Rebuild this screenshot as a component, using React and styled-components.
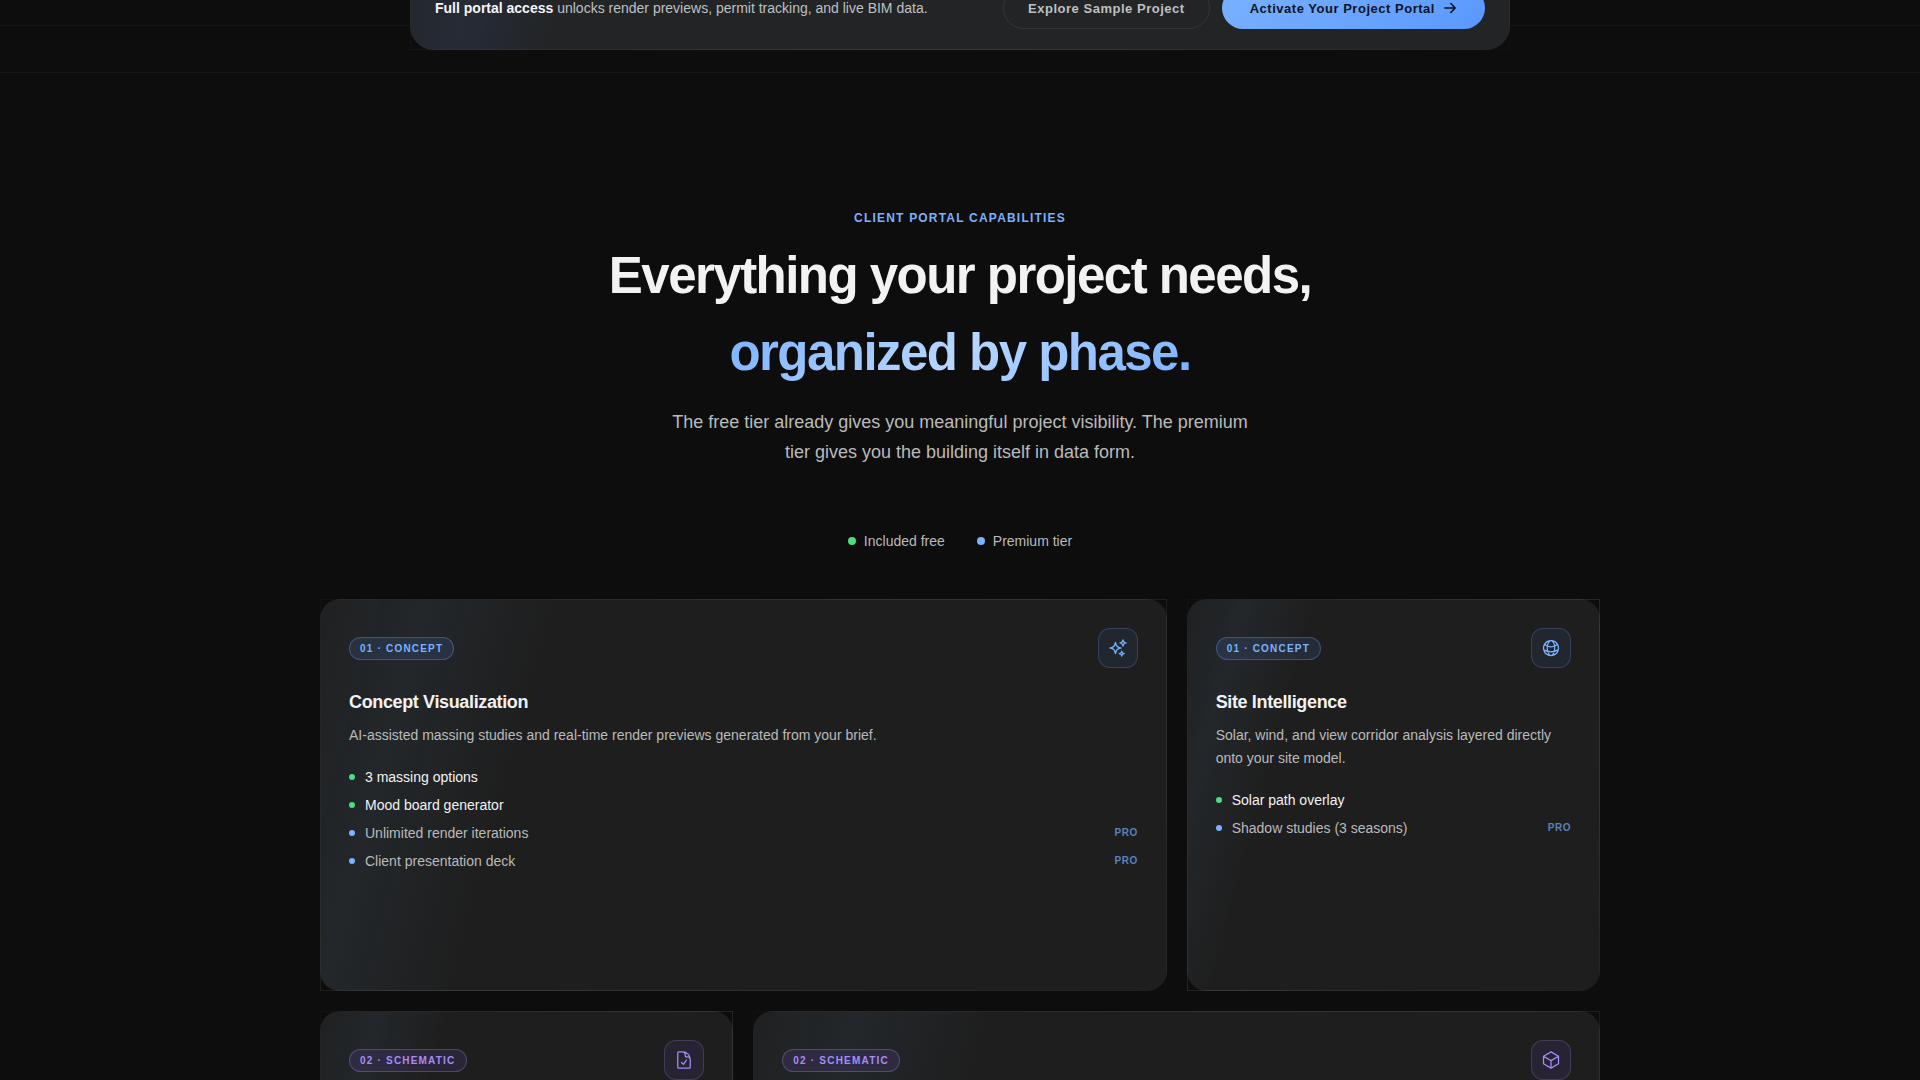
import React from 'react';
import styled, { createGlobalStyle } from 'styled-components';
import {
  HiOutlineArrowRight,
  HiOutlineCube,
  HiOutlineDocumentCheck,
  HiOutlineGlobeAlt,
  HiOutlineSparkles,
} from 'react-icons/hi2';

const GlobalStyle = createGlobalStyle`
  * {
    box-sizing: border-box;
  }

  body {
    margin: 0;
    background: #0d0d0d;
    color: #f2f2f3;
    font-family: "Liberation Sans", Arial, sans-serif;
    font-size: 14px;
    line-height: 22px;
  }
`;

const accents = {
  concept: {
    text: '#7ab2ff',
    fill: 'rgba(90, 152, 255, 0.12)',
    softFill: 'rgba(90, 152, 255, 0.08)',
    border: 'rgba(122, 178, 255, 0.28)',
    softBorder: 'rgba(122, 178, 255, 0.2)',
  },
  schematic: {
    text: '#a78bfa',
    fill: 'rgba(139, 92, 246, 0.12)',
    softFill: 'rgba(139, 92, 246, 0.1)',
    border: 'rgba(190, 175, 250, 0.24)',
    softBorder: 'rgba(190, 175, 250, 0.18)',
  },
};

// The banner sits on the bottom of this strip and runs off the top of it
const PromoSection = styled.section`
  position: relative;
  display: flex;
  align-items: flex-end;
  justify-content: center;
  height: 73px;
  padding: 0 24px 22px;
  border-bottom: 1px solid #151515;
  overflow: hidden;

  &::before {
    content: '';
    position: absolute;
    inset: 0 0 auto;
    height: 25px;
    border-bottom: 1px solid #151515;
  }
`;

const edgeGradient = 'linear-gradient(135deg, rgba(255, 255, 255, 0.02) 0%, rgba(255, 255, 255, 0.1) 50%, rgba(255, 255, 255, 0.01) 100%)';

const Banner = styled.div`
  position: relative;
  display: flex;
  align-items: center;
  justify-content: space-between;
  gap: 24px;
  width: 100%;
  max-width: 1100px;
  padding: 20px 24px;
  border: 1px solid transparent;
  border-image: ${edgeGradient} 1;
  border-radius: 24px;
  background:
    linear-gradient(100deg, rgba(90, 140, 255, 0.04) 0%, rgba(90, 130, 255, 0.07) 6%, transparent 14%),
    #222426;
`;

const BannerText = styled.p`
  margin: 0;
  color: #bec0c2;

  strong {
    color: #f5f5f6;
  }
`;

const BannerActions = styled.div`
  display: flex;
  flex-shrink: 0;
  gap: 12px;
`;

const Button = styled.button`
  display: inline-flex;
  align-items: center;
  gap: 8px;
  height: 42px;
  padding: 0 ${props => props.$primary ? '28px' : '24px'};
  border: ${props => props.$primary ? 'none' : '1px solid rgba(255, 255, 255, 0.07)'};
  border-radius: 21px;
  background: ${props => props.$primary ? 'linear-gradient(135deg, #7ab2ff, #5a98ff)' : 'transparent'};
  color: ${props => props.$primary ? '#0d1522' : '#bec0c2'};
  font-family: inherit;
  font-size: 13px;
  font-weight: 700;
  letter-spacing: 0.04em;
  cursor: pointer;

  svg {
    stroke-width: 2.5;
  }
`;

const Capabilities = styled.section`
  padding: 135px 24px 120px;
`;

const Header = styled.header`
  text-align: center;
`;

const Eyebrow = styled.p`
  margin: 0 0 9px;
  color: #7ab2ff;
  font-size: 12px;
  font-weight: 700;
  line-height: 20px;
  letter-spacing: 0.1em;
  text-transform: uppercase;
`;

const Title = styled.h2`
  margin: 0;
  font-size: 51px;
  font-weight: 700;
  line-height: 77px;
  letter-spacing: -0.03em;
`;

const TitleAccent = styled.span`
  background: linear-gradient(135deg, #7ab2ff 0%, #b8d6ff 50%, #7ab2ff 100%);
  background-clip: text;
  -webkit-background-clip: text;
  color: transparent;
`;

const Lead = styled.p`
  max-width: 600px;
  margin: 16px auto 0;
  color: #bababb;
  font-size: 18px;
  line-height: 30px;
`;

const Legend = styled.ul`
  display: flex;
  justify-content: center;
  gap: 32px;
  margin: 63px 0 47px;
  padding: 0;
  list-style: none;
  color: #bababb;
`;

const LegendItem = styled.li`
  display: flex;
  align-items: center;
  gap: 8px;
`;

const Dot = styled.span`
  flex-shrink: 0;
  width: ${props => props.$size}px;
  height: ${props => props.$size}px;
  border-radius: 50%;
  background: ${props => props.$premium ? '#7ab2ff' : '#4ade80'};
`;

const Grid = styled.div`
  display: grid;
  grid-template-columns: repeat(3, 1fr);
  grid-auto-rows: minmax(392px, auto);
  gap: 20px;
  max-width: 1280px;
  margin: 0 auto;

  @media (max-width: 900px) {
    grid-template-columns: 1fr;
  }
`;

const Card = styled.article`
  grid-column: span ${props => props.$wide ? 2 : 1};
  padding: 28px;
  border: 1px solid transparent;
  border-image: ${edgeGradient} 1;
  border-radius: 20px;
  background:
    linear-gradient(105deg, rgba(100, 160, 210, 0.02) 0%, rgba(100, 160, 210, 0.07) 11%, transparent 25%),
    #1e1e1e;

  @media (max-width: 900px) {
    grid-column: span 1;
  }
`;

const CardTop = styled.div`
  display: flex;
  align-items: center;
  justify-content: space-between;
`;

const Badge = styled.span`
  padding: 2px 10px;
  border: 1px solid ${props => props.$accent.border};
  border-radius: 12px;
  background: ${props => props.$accent.fill};
  color: ${props => props.$accent.text};
  font-size: 10px;
  font-weight: 700;
  line-height: 17px;
  letter-spacing: 0.12em;
  text-transform: uppercase;
`;

const IconBox = styled.span`
  display: flex;
  align-items: center;
  justify-content: center;
  width: 40px;
  height: 40px;
  border: 1px solid ${props => props.$accent.softBorder};
  border-radius: 12px;
  background: ${props => props.$accent.softFill};
  color: ${props => props.$accent.text};
`;

const CardTitle = styled.h3`
  margin: 21px 0 9px;
  font-size: 18px;
  font-weight: 700;
  line-height: 26px;
  letter-spacing: -0.02em;
`;

const CardText = styled.p`
  margin: 0 0 19px;
  color: #bababb;
  line-height: 23px;
`;

const FeatureList = styled.ul`
  display: grid;
  gap: 6px;
  margin: 0;
  padding: 0;
  list-style: none;
`;

const Feature = styled.li`
  display: flex;
  align-items: center;
  gap: 10px;
  color: ${props => props.$premium ? '#bababb' : '#f2f2f3'};
`;

const ProTag = styled.span`
  margin-left: auto;
  color: #5a82ba;
  font-size: 10px;
  font-weight: 700;
  letter-spacing: 0.05em;
`;

const cards = [
  {
    id: 'visualization',
    phase: '01 · Concept',
    accent: accents.concept,
    icon: HiOutlineSparkles,
    wide: true,
    title: 'Concept Visualization',
    text: 'AI-assisted massing studies and real-time render previews generated from your brief.',
    features: [
      { label: '3 massing options' },
      { label: 'Mood board generator' },
      { label: 'Unlimited render iterations', premium: true },
      { label: 'Client presentation deck', premium: true },
    ],
  },
  {
    id: 'site',
    phase: '01 · Concept',
    accent: accents.concept,
    icon: HiOutlineGlobeAlt,
    title: 'Site Intelligence',
    text: 'Solar, wind, and view corridor analysis layered directly onto your site model.',
    features: [
      { label: 'Solar path overlay' },
      { label: 'Shadow studies (3 seasons)', premium: true },
    ],
  },
  {
    id: 'documents',
    phase: '02 · Schematic',
    accent: accents.schematic,
    icon: HiOutlineDocumentCheck,
  },
  {
    id: 'model',
    phase: '02 · Schematic',
    accent: accents.schematic,
    icon: HiOutlineCube,
    wide: true,
  },
];

const CapabilityCard = ({ card }) => {
  const Icon = card.icon;

  return (
    <Card $wide={card.wide}>
      <CardTop>
        <Badge $accent={card.accent}>{card.phase}</Badge>
        <IconBox $accent={card.accent}>
          <Icon size={20} aria-hidden="true" />
        </IconBox>
      </CardTop>
      {card.title && <CardTitle>{card.title}</CardTitle>}
      {card.text && <CardText>{card.text}</CardText>}
      {card.features && (
        <FeatureList>
          {card.features.map(feature => (
            <Feature key={feature.label} $premium={feature.premium}>
              <Dot $size={6} $premium={feature.premium} />
              {feature.label}
              {feature.premium && <ProTag>PRO</ProTag>}
            </Feature>
          ))}
        </FeatureList>
      )}
    </Card>
  );
};

const App = () => (
  <>
    <GlobalStyle />
    <PromoSection>
      <Banner>
        <BannerText>
          <strong>Full portal access</strong> unlocks render previews, permit tracking, and live BIM data.
        </BannerText>
        <BannerActions>
          <Button type="button">Explore Sample Project</Button>
          <Button type="button" $primary>
            Activate Your Project Portal
            <HiOutlineArrowRight size={14} aria-hidden="true" />
          </Button>
        </BannerActions>
      </Banner>
    </PromoSection>

    <Capabilities>
      <Header>
        <Eyebrow>Client Portal Capabilities</Eyebrow>
        <Title>
          Everything your project needs,
          <br />
          <TitleAccent>organized by phase.</TitleAccent>
        </Title>
        <Lead>
          The free tier already gives you meaningful project visibility. The premium tier gives you the building itself in data form.
        </Lead>
      </Header>

      <Legend>
        <LegendItem>
          <Dot $size={8} />
          Included free
        </LegendItem>
        <LegendItem>
          <Dot $size={8} $premium />
          Premium tier
        </LegendItem>
      </Legend>

      <Grid>
        {cards.map(card => (
          <CapabilityCard key={card.id} card={card} />
        ))}
      </Grid>
    </Capabilities>
  </>
);

export default App;
